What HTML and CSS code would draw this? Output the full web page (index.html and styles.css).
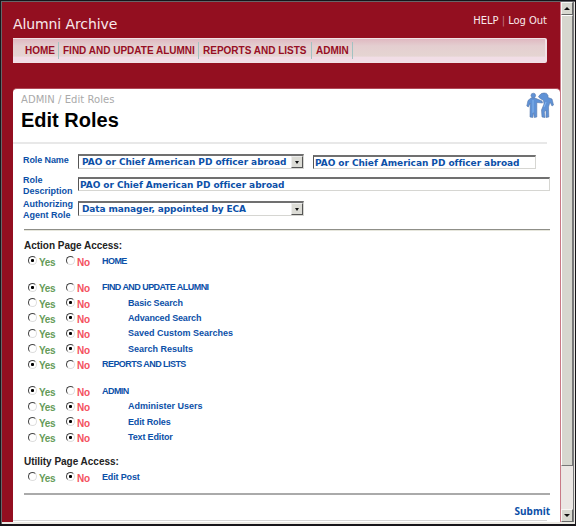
FILE: index.html
```html
<!DOCTYPE html>
<html lang="en">
<head>
<meta charset="utf-8">
<title>Alumni Archive - Edit Roles</title>
<link rel="stylesheet" href="styles.css">
</head>
<body>
<div class="window">
  <div class="page">
    <header class="header">
      <div class="brand-row">
        <span class="brand">Alumni Archive</span>
        <span class="links">HELP <i>|</i> Log Out</span>
      </div>
      <nav class="nav">
        <a class="n-home">HOME</a><a class="n-find">FIND AND UPDATE ALUMNI</a><a class="n-rep">REPORTS AND LISTS</a><a class="n-admin">ADMIN</a>
      </nav>
    </header>
    <main class="panel">
      <div class="heading">
        <div>
          <div class="crumb">ADMIN / Edit Roles</div>
          <h1>Edit Roles</h1>
        </div>
        <svg class="people" width="28" height="28" viewBox="0 0 28 28">
          <g fill="#5f92d6" stroke="#5577ab" stroke-width=".6" stroke-linejoin="round">
            <path d="M5 6 Q7.500 5 10 6.500 L16 9 L16.500 11 L10.800 10.500 L10.800 25 L8.300 25.500 L7.500 20 L6.800 25.500 L4 25 L4.200 11 L2.300 15 L.8 14 L2 8.500Z"/>
            <path d="M12.500 4.500 Q15 .5 18 1 Q21 .5 22 3.500 L22 5.500 L26 7 L27.500 13 L26 14 L24 10 L22.500 15 L22.800 25 L20 25.500 L20 18 L18.300 20 L19 25.500 L16 25 L15.500 18 L18 12 L17.500 8.500 L13.500 6Z"/>
            <circle cx="7.300" cy="3.500" r="2.300"/>
          </g>
          <path d="M7 8V21M20 10L18 15" stroke="#83b5ef" fill="none"/>
        </svg>
      </div>
      <div class="rule-top"></div>
      <form class="form">
        <label class="l1">Role Name</label>
        <div class="fields">
          <div class="select"><span>PAO or Chief American PD officer abroad</span><b class="arrow"></b></div>
          <div class="input short"><span>PAO or Chief American PD officer abroad</span></div>
        </div>
        <label class="l2">Role<br>Description</label>
        <div class="input long"><span>PAO or Chief American PD officer abroad</span></div>
        <label class="l3">Authorizing<br>Agent Role</label>
        <div class="select"><span class="eca">Data manager, appointed by ECA</span><b class="arrow"></b></div>
      </form>
      <section class="access">
        <h2>Action Page Access:</h2>
        <div class="row"><i class="radio on"></i><span class="yes">Yes</span><i class="radio"></i><span class="no">No</span><span class="name caps">HOME</span></div>
        <div class="row gap"><i class="radio on"></i><span class="yes">Yes</span><i class="radio"></i><span class="no">No</span><span class="name caps">FIND AND UPDATE ALUMNI</span></div>
        <div class="row"><i class="radio"></i><span class="yes">Yes</span><i class="radio on"></i><span class="no">No</span><span class="name sub">Basic Search</span></div>
        <div class="row"><i class="radio"></i><span class="yes">Yes</span><i class="radio on"></i><span class="no">No</span><span class="name sub">Advanced Search</span></div>
        <div class="row"><i class="radio"></i><span class="yes">Yes</span><i class="radio on"></i><span class="no">No</span><span class="name sub wide">Saved Custom Searches</span></div>
        <div class="row"><i class="radio"></i><span class="yes">Yes</span><i class="radio on"></i><span class="no">No</span><span class="name sub wide">Search Results</span></div>
        <div class="row"><i class="radio on"></i><span class="yes">Yes</span><i class="radio"></i><span class="no">No</span><span class="name caps">REPORTS AND LISTS</span></div>
        <div class="row gap"><i class="radio on"></i><span class="yes">Yes</span><i class="radio"></i><span class="no">No</span><span class="name caps">ADMIN</span></div>
        <div class="row"><i class="radio"></i><span class="yes">Yes</span><i class="radio on"></i><span class="no">No</span><span class="name sub wide">Administer Users</span></div>
        <div class="row"><i class="radio"></i><span class="yes">Yes</span><i class="radio on"></i><span class="no">No</span><span class="name sub">Edit Roles</span></div>
        <div class="row"><i class="radio"></i><span class="yes">Yes</span><i class="radio on"></i><span class="no">No</span><span class="name sub">Text Editor</span></div>
        <h2 class="utility">Utility Page Access:</h2>
        <div class="row"><i class="radio"></i><span class="yes">Yes</span><i class="radio on"></i><span class="no">No</span><span class="name">Edit Post</span></div>
      </section>
      <div class="submit">Submit</div>
      <div class="rule-bottom"></div>
    </main>
  </div>
  <div class="scrollbar">
    <div class="btn"><b class="up"></b></div>
    <div class="thumb"></div>
    <div class="track"></div>
    <div class="btn"><b class="down"></b></div>
  </div>
</div>
</body>
</html>
```
FILE: styles.css
```css
* { box-sizing: border-box; }
body { margin: 0; font-family: "Liberation Sans", Arial, sans-serif; background: #fff; }
i { font-style: normal; }
.window { width: 576px; height: 526px; display: flex; background: #eceae4; border: 1px solid #17151a; border-bottom-width: 2px; padding: 1px 1px 2px; box-shadow: inset 1px 1px #66666a; }
.page { width: 559px; flex: none; display: flex; flex-direction: column; background: #930f20; border-right: 1px solid #c87a87; }
.header { height: 86px; padding: 0 13px 0 11px; }
.brand-row { height: 36px; display: flex; justify-content: space-between; font-family: "DejaVu Sans", Verdana, sans-serif; color: #f8e9eb; }
.brand { font-size: 14px; line-height: 16px; padding-top: 14px; letter-spacing: -.1px; }
.links { font-size: 10px; line-height: 12px; padding-top: 13px; letter-spacing: -.05px; }
.links i { color: #c27782; }
.nav { height: 25px; display: flex; align-items: center; padding-left: 12px; border: 1px solid #f1e1e5; border-width: 1px 2px 1px 0; border-radius: 0 2px 2px 0; background: linear-gradient(#dfb9c1, #e4ced0 30%, #e5d5d2 75%, #f1dde6 78%); }
.nav a { font-size: 10px; font-weight: bold; color: #970e24; line-height: 18px; height: 17px; border-right: 1px solid #a2c2c2; white-space: nowrap; margin-right: 4px; }
.n-home { width: 34px; }
.n-find { width: 136px; }
.n-rep { width: 109px; }
.n-admin { width: 37px; }
.panel { width: 547px; height: 434px; margin-left: 11px; background: #fff; border-top: 1px solid #b04a58; border-radius: 4px 4px 0 0; overflow: hidden; }
.heading { height: 53px; display: flex; justify-content: space-between; padding: 3px 6px 0 8px; }
.crumb { font: 10px/14px "DejaVu Sans", Verdana, sans-serif; letter-spacing: .05px; color: #aaa; margin-top: 1px; }
h1 { margin: 2px 0 0; font-size: 20px; line-height: 23px; color: #000; }
.rule-top { width: 534px; height: 2px; background: #e8e8e8; }
.form { display: grid; grid-template-columns: 54px 472px; grid-template-rows: 30px 24px 28px; margin: 3px 0 0 11px; width: 526px; border-bottom: 1px solid #8f8f88; box-shadow: 0 1px #e6e6dc; color: #0c50a8; }
.form label { font-size: 9px; line-height: 11px; font-weight: bold; margin-left: -1px; white-space: nowrap; }
.l1 { padding-top: 8px; letter-spacing: -.1px; }
.form .l2 { margin-top: -2px; }
.form .l3 { margin-top: -2px; }
.fields { display: flex; padding-top: 7px; }
.select, .input { height: 14px; font: bold 9px/11px "DejaVu Sans", Verdana, sans-serif; letter-spacing: -.05px; border: 1px solid #d6d6d2; border-top: 2px solid #707070; border-left-color: #555; white-space: nowrap; display: flex; }
.select { width: 226px; height: 15px; line-height: 13px; padding-left: 3px; justify-content: space-between; }
.eca { letter-spacing: -.1px; }
.input { line-height: 13px; padding-left: 1px; }
.short { width: 223px; margin: 1px 0 0 9px; }
.long { width: 472px; }
.arrow { width: 12px; height: 12px; background: #dcdcd6; border: 1px solid #555; border-top-color: #eee; border-left-color: #eee; display: grid; place-items: center; }
.arrow::before, .down, .up { content: ""; width: 0; height: 0; border: 2px solid transparent; border-top: 3px solid #111; border-bottom: 0; }
.access { padding: 10px 0 0; height: 265px; width: 526px; border-bottom: 2px solid #aaa; margin-left: 11px; }
h2 { margin: 0; font-size: 10px; line-height: 12px; height: 12px; color: #222; letter-spacing: -.02px; }
h2 + .row { margin-top: -.5px; }
.row { height: 15.4px; display: grid; grid-template-columns: 11px 27px 11px 25px 1fr; padding-left: 4px; align-items: center; white-space: nowrap; }
.gap { margin-top: 11.300px; }
.yes, .no { font-size: 10px; line-height: 15px; padding-top: 3px; color: #659b59; font-weight: bold; letter-spacing: -.3px; }
.no { color: #f4515e; }
.name { color: #0c50a8; font-weight: bold; font-size: 9px; line-height: 12px; letter-spacing: -.15px; }
.caps { letter-spacing: -.55px; }
.sub { padding-left: 26px; }
.wide { letter-spacing: 0; }
.radio { width: 9px; height: 9px; border-radius: 50%; border: 1px solid #444; border-right-color: #ddd; border-bottom-color: #ddd; display: grid; place-items: center; }
.on::before { content: ""; width: 3px; height: 3px; border-radius: 1px; background: #000; }
.utility { margin-top: 13px; }
.submit { margin-right: 10px; text-align: right; height: 25px; padding-top: 8px; font: bold 10px/16px "Noto Sans", Tahoma, sans-serif; color: #0c50a8; }
.rule-bottom { width: 534px; height: 1px; background: #d5d5d5; }
.scrollbar { width: 13px; flex: none; display: flex; flex-direction: column; background: #ebe7e4; border-right: 1px solid #77777a; }
.btn { height: 13px; background: #d8d8d0; border: 1px solid #f8f8f5; border-right-color: #666; border-bottom: 1px solid #666; display: grid; place-items: center; }
.up { border-width: 0 3px 3px; border-color: transparent transparent #111; border-style: solid; }
.down { border-width: 3px 3px 0; }
.thumb { height: 451px; background: #d7d7cf; border: 1px solid #fff; border-right-color: #777; border-bottom: 1px solid #777; }
.track { flex: 1; }
```
